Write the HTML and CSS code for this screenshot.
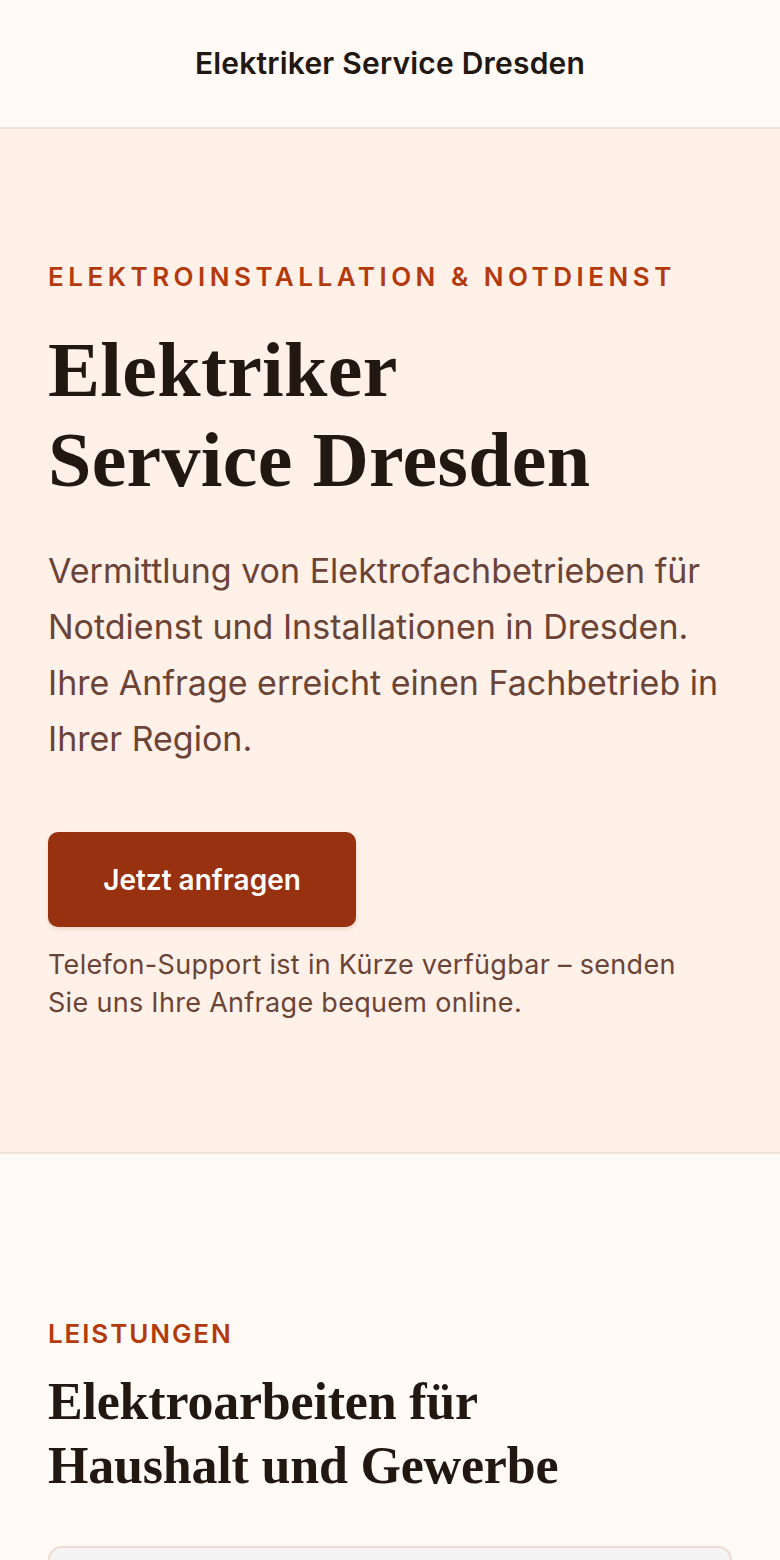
FILE: index.html
```html
<!DOCTYPE html>
<html lang="de">
<head>
<meta charset="utf-8">
<meta name="viewport" content="width=device-width, initial-scale=1">
<title>Elektriker Service Dresden</title>
<link rel="stylesheet" href="styles.css">
</head>
<body>
  <header class="site-header">
    <span class="brand">Elektriker Service Dresden</span>
  </header>

  <main>
    <section class="hero">
      <p class="eyebrow eyebrow-wide">Elektroinstallation &amp; Notdienst</p>
      <h1 class="hero-title">Elektriker<br>Service Dresden</h1>
      <p class="hero-lead">Vermittlung von Elektrofachbetrieben für Notdienst und Installationen in Dresden. Ihre Anfrage erreicht einen Fachbetrieb in Ihrer Region.</p>
      <a class="btn-primary" href="#anfrage">Jetzt anfragen</a>
      <p class="hero-note">Telefon-Support ist in Kürze verfügbar – senden Sie uns Ihre Anfrage bequem online.</p>
    </section>

    <section class="services">
      <p class="eyebrow">Leistungen</p>
      <h2 class="section-title">Elektroarbeiten für Haushalt und Gewerbe</h2>
      <div class="service-card"></div>
    </section>
  </main>
</body>
</html>
```

FILE: styles.css
```css
* {
  box-sizing: border-box;
}

html, body {
  margin: 0;
  padding: 0;
}

body {
  background: #fffaf6;
  color: #221812;
  font-family: Inter, "Noto Sans", "Liberation Sans", sans-serif;
}

.site-header {
  height: 129px;
  display: flex;
  align-items: center;
  justify-content: center;
  background: #fffaf6;
  border-bottom: 2px solid #efe2dc;
}

.brand {
  font-size: 30px;
  font-weight: 600;
  letter-spacing: 0.2px;
  color: #221812;
  padding-bottom: 2px;
}

.hero {
  background: #fff0e8;
  padding: 130px 48px 130px;
  border-bottom: 2px solid #efe2dc;
}

.eyebrow {
  margin: 0;
  color: #b23a0c;
  font-size: 26px;
  font-weight: 600;
  text-transform: uppercase;
  letter-spacing: 1.9px;
  line-height: 36px;
}

.eyebrow-wide {
  letter-spacing: 4.5px;
}

.hero-title {
  margin: 30px 0 0;
  font-family: "Liberation Serif", "DejaVu Serif", serif;
  font-weight: 700;
  font-size: 78px;
  line-height: 90px;
  letter-spacing: 0.3px;
  color: #221812;
}

.hero-lead {
  margin: 38px 0 0;
  font-size: 34px;
  line-height: 56px;
  color: #6b4438;
}

.btn-primary {
  display: inline-flex;
  align-items: center;
  justify-content: center;
  margin-top: 65px;
  width: 308px;
  height: 95px;
  border-radius: 10px;
  background: #97310f;
  color: #ffffff;
  font-size: 28px;
  font-weight: 600;
  text-decoration: none;
  box-shadow: 0 2px 4px rgba(120, 40, 10, 0.15);
}

.hero-note {
  margin: 19px 0 0;
  font-size: 27px;
  line-height: 38px;
  letter-spacing: 0.3px;
  color: #6b4438;
  max-width: 650px;
}

.services {
  padding: 162px 48px 0;
}

.section-title {
  margin: 18px 0 0;
  font-family: "Liberation Serif", "DejaVu Serif", serif;
  font-weight: 700;
  font-size: 52px;
  line-height: 64px;
  letter-spacing: -0.2px;
  color: #221812;
  max-width: 580px;
}

.service-card {
  margin-top: 48px;
  height: 200px;
  border: 2px solid #eddcd4;
  border-radius: 14px;
  background: #f5f4f5;
}
```
